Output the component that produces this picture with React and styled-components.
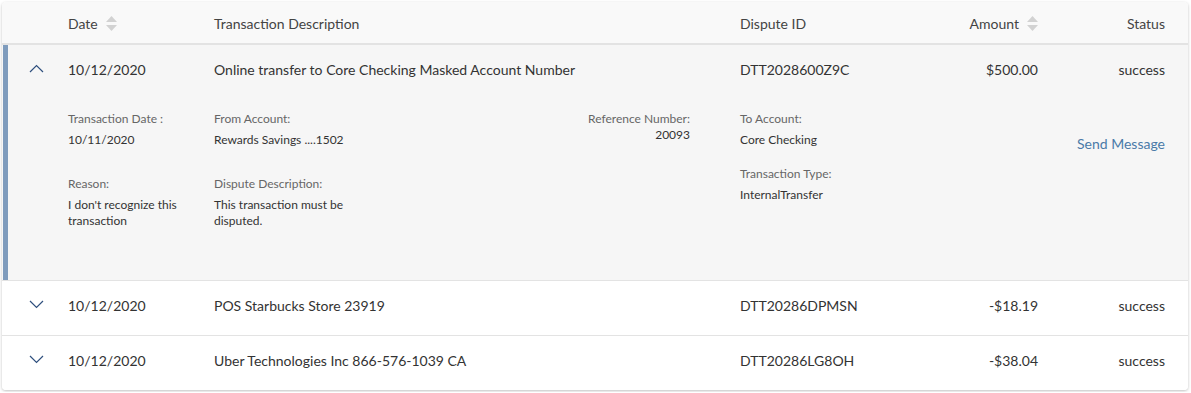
import React from 'react'
import styled, { createGlobalStyle } from 'styled-components'

const GlobalStyle = createGlobalStyle`
  body {
    margin: 0;
    background: #ffffff;
    font-family: Lato, 'Open Sans', sans-serif;
    color: #333;
  }
`

const columns = '66px 146px 526px 180px 118px 1fr'

const Card = styled.section`
  margin: 2px;
  width: 1186px;
  border-radius: 4px;
  background: #fff;
  box-shadow: 0 1px 3px rgba(0, 0, 0, 0.25);
  overflow: hidden;
`

const HeaderRow = styled.div`
  display: grid;
  grid-template-columns: ${columns};
  align-items: center;
  height: 41px;
  padding-right: 23px;
  background: #f9f9f9;
  border-bottom: 2px solid #e3e3e3;
  font-size: 14px;
  color: #444;
`

const HeadCell = styled.div`
  display: flex;
  align-items: center;
  gap: 8px;
  padding-top: 1px;
  justify-content: ${(p) => (p.$right ? 'flex-end' : 'flex-start')};
`

const SortIcon = () => (
  <svg width='11' height='15' viewBox='0 0 11 15'>
    <path d='M5.5 0 L11 6 H0 Z' fill='#d2d2d2' />
    <path d='M5.5 15 L11 9 H0 Z' fill='#d2d2d2' />
  </svg>
)

const Chevron = ({ up }) => (
  <svg width='15' height='9' viewBox='0 0 15 9'>
    <polyline
      points={up ? '1,8 7.5,1.5 14,8' : '1,1 7.5,7.5 14,1'}
      fill='none'
      stroke='#2f507e'
      strokeWidth='1.2'
    />
  </svg>
)

const Row = styled.div`
  position: relative;
  background: ${(p) => (p.$open ? '#f6f6f6' : '#fff')};
  border-bottom: ${(p) => (p.$last ? 'none' : '1px solid #e3e3e3')};

  &::before {
    content: '';
    display: ${(p) => (p.$open ? 'block' : 'none')};
    position: absolute;
    left: 1px;
    top: 0;
    bottom: 0;
    width: 5px;
    background: #7f9cbd;
  }
`

const MainLine = styled.div`
  display: grid;
  grid-template-columns: ${columns};
  align-items: center;
  box-sizing: border-box;
  height: ${(p) => (p.$open ? '50px' : '54px')};
  padding: 0 23px ${(p) => (p.$open ? '2px' : '5px')} 0;
  font-size: 14px;
  color: #333;
`

const Cell = styled.div`
  text-align: ${(p) => (p.$right ? 'right' : 'left')};
  white-space: nowrap;
`

const ToggleCell = styled.div`
  display: flex;
  justify-content: center;
  padding-left: 2px;
  padding-bottom: 2px;
`

const Details = styled.div`
  display: grid;
  grid-template-columns: ${columns};
  padding: 16px 23px 51px 0;
  font-size: 12px;
`

const Stack = styled.div`
  display: flex;
  flex-direction: column;
  gap: ${(p) => p.$gap}px;
`

const DescDetails = styled.div`
  display: flex;
  justify-content: space-between;
  padding-right: 50px;
`

const Field = styled.div`
  display: flex;
  flex-direction: column;
  gap: ${(p) => (p.$tight ? 0 : 5)}px;
  text-align: ${(p) => (p.$right ? 'right' : 'left')};
  line-height: 16px;
`

const Label = styled.span`
  color: #666;
`

const Value = styled.span`
  color: #333;
  max-width: ${(p) => p.$max || 'none'};
`

const LinkCell = styled.div`
  grid-column: 6;
  text-align: right;
  padding-top: 24px;
`

const SendLink = styled.a`
  color: #4a7aa8;
  font-size: 14px;
  text-decoration: none;
  cursor: pointer;
`

const rows = [
  {
    date: '10/12/2020',
    desc: 'Online transfer to Core Checking Masked Account Number',
    id: 'DTT2028600Z9C',
    amount: '$500.00',
    status: 'success',
    open: true,
  },
  {
    date: '10/12/2020',
    desc: 'POS Starbucks Store 23919',
    id: 'DTT20286DPMSN',
    amount: '-$18.19',
    status: 'success',
  },
  {
    date: '10/12/2020',
    desc: 'Uber Technologies Inc 866-576-1039 CA',
    id: 'DTT20286LG8OH',
    amount: '-$38.04',
    status: 'success',
  },
]

const DetailPanel = () => (
  <Details>
    <div />
    <Stack $gap={28}>
      <Field>
        <Label>Transaction Date :</Label>
        <Value>10/11/2020</Value>
      </Field>
      <Field>
        <Label>Reason:</Label>
        <Value $max='125px'>I don't recognize this transaction</Value>
      </Field>
    </Stack>
    <DescDetails>
      <Stack $gap={28}>
        <Field>
          <Label>From Account:</Label>
          <Value>Rewards Savings ....1502</Value>
        </Field>
        <Field>
          <Label>Dispute Description:</Label>
          <Value $max='140px'>This transaction must be disputed.</Value>
        </Field>
      </Stack>
      <Field $tight $right>
        <Label>Reference Number:</Label>
        <Value>20093</Value>
      </Field>
    </DescDetails>
    <Stack $gap={18}>
      <Field>
        <Label>To Account:</Label>
        <Value>Core Checking</Value>
      </Field>
      <Field>
        <Label>Transaction Type:</Label>
        <Value>InternalTransfer</Value>
      </Field>
    </Stack>
    <LinkCell>
      <SendLink>Send Message</SendLink>
    </LinkCell>
  </Details>
)

const App = () => (
  <>
    <GlobalStyle />
    <Card>
      <HeaderRow>
        <div />
        <HeadCell>
          Date <SortIcon />
        </HeadCell>
        <HeadCell>Transaction Description</HeadCell>
        <HeadCell>Dispute ID</HeadCell>
        <HeadCell $right>
          Amount <SortIcon />
        </HeadCell>
        <HeadCell $right>Status</HeadCell>
      </HeaderRow>

      {rows.map((r, i) => (
        <Row key={r.id} $open={r.open} $last={i === rows.length - 1}>
          <MainLine $open={r.open}>
            <ToggleCell>
              <Chevron up={r.open} />
            </ToggleCell>
            <Cell>{r.date}</Cell>
            <Cell>{r.desc}</Cell>
            <Cell>{r.id}</Cell>
            <Cell $right>{r.amount}</Cell>
            <Cell $right>{r.status}</Cell>
          </MainLine>
          {r.open && <DetailPanel />}
        </Row>
      ))}
    </Card>
  </>
)

export default App
